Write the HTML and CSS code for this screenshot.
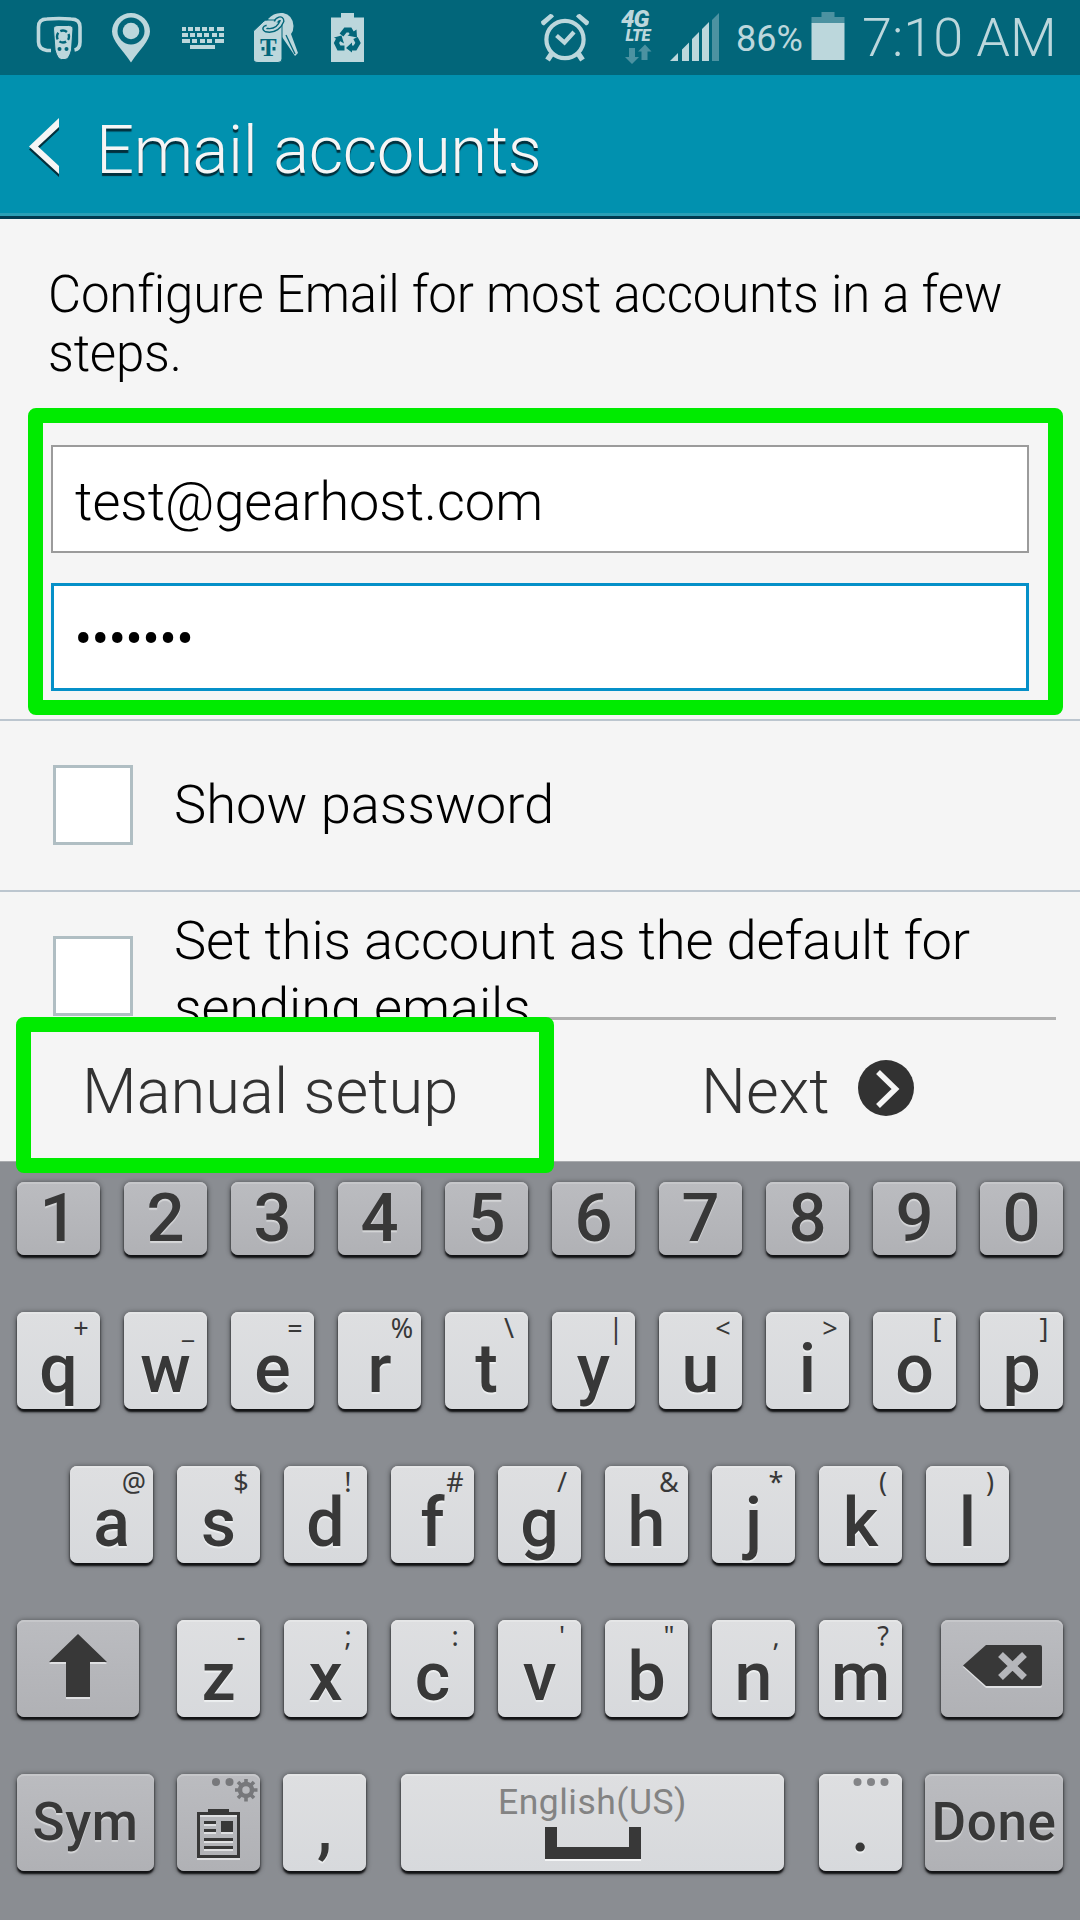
FILE: index.html
```html
<!DOCTYPE html>
<html lang="en">
<head>
<meta charset="utf-8">
<title>Email accounts</title>
<link rel="stylesheet" href="styles.css">
</head>
<body>
<div class="screen">
  <div class="status">
    <svg class="status-left" viewBox="0 0 400 75" width="400" height="75">
      <g fill="none" stroke="#bcd7dc" stroke-width="3.6">
        <path d="M51 50.5H47Q38.500 49 38.500 42V27Q38.500 19 47 19Q59 18 71 19Q80 19 80 27V42Q80 49 74.500 50"/>
      </g>
      <path fill="#bcd7dc" stroke="#02667a" stroke-width="1" d="M53.500 29Q53.500 25.500 58 25.500H68.500Q73 25.500 73 29L71.500 50Q69 59.500 65 59.500H61.500Q57.500 59.500 55 50Z"/>
      <circle cx="63" cy="36.500" r="6" fill="none" stroke="#02667a" stroke-width="2.400" stroke-dasharray="7 2.420" stroke-dashoffset="3.500"/>
      <circle cx="59.500" cy="49" r="2" fill="#02667a"/><circle cx="66.500" cy="49" r="2" fill="#02667a"/>
      <path fill="#bcd7dc" d="M131 13a19 18.500 0 0 1 19 18.500C150 41 139 50 131 62.500C123 50 112 41 112 31.500A19 18.500 0 0 1 131 13Z"/>
      <circle cx="131" cy="31" r="13.500" fill="#02667a"/><circle cx="131" cy="31" r="8.300" fill="#bcd7dc"/>
      <g fill="#bcd7dc">
        <path d="M182 27h4v4h-4zM188 27h5v4h-5zM195 27h5v4h-5zM202 27h5v4h-5zM209 27h5v4h-5zM217 27h7v4h-7zM182 33h6v4h-6zM190 33h5v4h-5zM197 33h5v4h-5zM204 33h5v4h-5zM212 33h5v4h-5zM219 33h5v4h-5zM182 39h8v4h-8zM192 39h5v4h-5zM200 39h5v4h-5zM207 39h5v4h-5zM215 39h9v4h-9zM190 45h25v4h-25z"/>
        <path d="M268 19Q274 12 283 13Q293 15 293.500 26Q293.500 31 291 34L298 53L295 56L280 34Z"/>
        <path d="M253.500 31L264 21Q265 20 268 20H279Q282 21 282 24V59Q282 62.500 278 62.500H258Q253.500 62.500 253.500 59Z" stroke="#02667a" stroke-width="1"/>
      </g>
      <path d="M267 27Q263 28 266 30C275 32 280 26 282 21C282 17 277 19 276 22" fill="none" stroke="#02667a" stroke-width="5"/>
      <path d="M267 27Q263 28 266 30C275 32 280 26 282 21C282 17 277 19 276 22" fill="none" stroke="#bcd7dc" stroke-width="2.300"/>
      <path d="M286 35L295 54" stroke="#02667a" stroke-width="1.300"/>
      <text class="tag-letter" x="268.300" y="56" text-anchor="middle">T</text>
      <path fill="#02667a" d="M261.500 47h3v3.500h-3zM272.500 47h3v3.500h-3z"/>
      <path fill="#bcd7dc" d="M341 13h13v4.500h10V62H331V17.500H341Z"/>
      <g fill="none" stroke="#02667a" stroke-width="4.800">
        <path d="M341.500 35L345.500 30H350L353 35"/>
        <path d="M355.500 38L358 43L355 48H350"/>
        <path d="M344.500 48H339L336.500 43L339 38"/>
      </g>
      <path fill="#02667a" d="M347.500 35.500L357 37.500L356.500 29.500ZM352 42.500V52.500L346 48ZM334 37.500L341.500 35.500L344 43.500Z"/>
    </svg>
    <svg class="status-right" viewBox="530 0 206 75" width="206" height="75">
      <g fill="none" stroke="#bcd7dc">
        <circle cx="565" cy="39.500" r="18.600" stroke-width="4.200"/>
        <path stroke-width="4.200" d="M556.500 35.500L564.500 42.500L574 32"/>
        <path stroke-width="5.500" d="M551.500 54L547.500 60M578.500 54L582.500 60"/>
      </g>
      <path fill="#bcd7dc" d="M541 21.500L550 14Q553 13.500 554 16.500L544 25.500Q541 25 541 21.500ZM589 21.500L580 14Q577 13.500 576 16.500L586 25.500Q589 25 589 21.500Z"/>
      <text class="net4g" x="621" y="27.300">4G</text>
      <text class="netlte" x="625.500" y="41">LTE</text>
      <path fill="#4c92a1" d="M629 48h6v9h4L632 64L625 57h4zM641.500 60V51.500H638L645 44.500L651.500 51.500H647.500V60z"/>
      <path fill="#bcd7dc" d="M670 61L678 53V61ZM682 61V49.500L689 42.500V61ZM692 61V39L699 32V61ZM702 61V29L709 22V61Z"/>
      <path fill="#4c92a1" d="M712 61V20L719 13V61Z"/>
    </svg>
    <span class="percent">86%</span>
    <svg class="battery" viewBox="0 0 34 75" width="34" height="75"><path fill="#4c92a1" d="M10.500 12H23.500V17H33.500V23H.5V17H10.500Z"/><path fill="#bcd7dc" d="M.5 23H33.500V60H.5Z"/></svg>
    <span class="clock">7:10 AM</span>
  </div>

  <div class="header">
    <svg class="back" viewBox="0 0 34 64" width="34" height="64"><path d="M31 5V14L10 33.500L31 53V61L1 33.500Z" fill="#022f3c"/><path d="M31 2V11L10 30.500L31 50V58L1 30.500Z" fill="#f5f5f5"/></svg>
    <h1 class="title">Email accounts</h1>
  </div>

  <div class="content">
    <p class="intro">Configure Email for most accounts in a few steps.</p>
    <div class="fields">
      <div class="field">test@gearhost.com</div>
      <div class="field focused">•••••••</div>
    </div>
    <div class="option show"><span class="box"></span><span>Show password</span></div>
    <div class="option default"><span class="box"></span><span>Set this account as the default for sending emails</span></div>
    <div class="mark mark-fields"></div>
  </div>

  <div class="footer">
    <span class="manual">Manual setup</span>
    <span class="next">Next</span>
    <svg class="go" viewBox="0 0 58 58" width="58" height="58"><circle cx="29" cy="28" r="28" fill="#323232"/><path d="M21 12L38.500 29L21 46" fill="none" stroke="#f5f5f5" stroke-width="5.500"/></svg>
    <div class="mark mark-manual"></div>
  </div>

  <div class="keyboard">
    <div class="row numbers">
      <div class="key fn">1</div><div class="key fn">2</div><div class="key fn">3</div><div class="key fn">4</div><div class="key fn">5</div><div class="key fn">6</div><div class="key fn">7</div><div class="key fn">8</div><div class="key fn">9</div><div class="key fn">0</div>
    </div>
    <div class="row">
      <div class="key">q<i>+</i></div><div class="key">w<i>_</i></div><div class="key">e<i>=</i></div><div class="key">r<i>%</i></div><div class="key">t<i>\</i></div><div class="key">y<i>|</i></div><div class="key">u<i>&lt;</i></div><div class="key">i<i>&gt;</i></div><div class="key">o<i>[</i></div><div class="key">p<i>]</i></div>
    </div>
    <div class="row home">
      <div class="key">a<i>@</i></div><div class="key">s<i>$</i></div><div class="key">d<i>!</i></div><div class="key">f<i>#</i></div><div class="key">g<i>/</i></div><div class="key">h<i>&amp;</i></div><div class="key">j<i>*</i></div><div class="key">k<i>(</i></div><div class="key">l<i>)</i></div>
    </div>
    <div class="row">
      <div class="key fn wide shift"><svg viewBox="0 0 122 97" width="122" height="97"><path d="M61 16L90 44H73V79H49V44H32Z" fill="#dfe0e2"/><path d="M61 14L90 42H73V77H49V42H32Z" fill="#383838"/></svg></div>
      <div class="key">z<i>-</i></div><div class="key">x<i>;</i></div><div class="key">c<i>:</i></div><div class="key">v<i>'</i></div><div class="key">b<i>"</i></div><div class="key">n<i>,</i></div><div class="key">m<i>?</i></div>
      <div class="key fn wide del"><svg viewBox="0 0 122 97" width="122" height="97"><path d="M22 47L45 27H99Q101 27 101 29V66Q101 68 99 68H45Z" fill="#dfe0e2"/><path d="M22 45.500L45 25H99Q101 25 101 27V64Q101 66 99 66H45Z" fill="#383838"/><path d="M59.500 34.500L83.500 57.500M83.500 34.500L59.500 57.500" stroke="#b5b6ba" stroke-width="7"/></svg></div>
    </div>
    <div class="row bottom">
      <div class="key fn word sym">Sym</div>
      <div class="key fn clip"><svg viewBox="177 1774 83 97" width="83" height="97">
        <g fill="#77787b"><circle cx="216" cy="1782" r="4"/><circle cx="229.500" cy="1782" r="4"/></g>
        <circle cx="246" cy="1790" r="6" fill="none" stroke="#77787b" stroke-width="4.500"/>
        <path stroke="#77787b" stroke-width="3.600" d="M246 1779V1783M246 1797V1801.500M235 1790H239M253 1790H257.500M238 1782L241 1785M251 1795L254 1798M254 1782L251 1785M238 1798L241 1795"/>
        <path d="M198.500 1815.500H238.500V1858.500H198.500Z" fill="none" stroke="#dfe0e2" stroke-width="3"/>
        <path d="M198.500 1813.500H238.500V1856.500H198.500Z" fill="none" stroke="#383838" stroke-width="3"/>
        <path fill="#383838" d="M208 1809H229V1815H208Z"/>
        <path stroke="#dfe0e2" stroke-width="3" d="M204 1824.500H216M204 1832.500H216M204 1841.500H233M204 1849.500H233M221 1832.500H233"/>
        <path stroke="#383838" stroke-width="3" d="M204 1822.500H216M204 1830.500H216M204 1839.500H233M204 1847.500H233"/>
        <path fill="#383838" d="M221 1821H233V1832H221Z"/></svg></div>
      <div class="key comma">,</div>
      <div class="key space"><span class="lang">English(US)</span><svg viewBox="0 0 96 35" width="96" height="35"><path fill="#f4f5f6" d="M0 3H12V22H84V3H96V34H0Z"/><path fill="#383838" d="M0 0H12V20H84V0H96V32H0Z"/></svg></div>
      <div class="key dot">.<svg class="dots" viewBox="0 0 36 8" width="36" height="8"><g fill="#838487"><circle cx="4.500" cy="4" r="4"/><circle cx="18" cy="4" r="4"/><circle cx="31.500" cy="4" r="4"/></g></svg></div>
      <div class="key fn word done">Done</div>
    </div>
  </div>
</div>
</body>
</html>
```
FILE: styles.css
```css
* { box-sizing: border-box; }
body { margin: 0; font-family: Roboto, "Noto Sans", sans-serif; background: #f5f5f5; }
svg { display: block; flex: none; }
.screen { width: 1080px; height: 1920px; overflow: hidden; display: flex; flex-direction: column; background: #f5f5f5; }

.status { height: 75px; flex: none; display: flex; align-items: flex-start; background: #02667a; color: #bcd7dc; line-height: 75px; white-space: nowrap; font-weight: 300; }
.status-right { margin-left: 130px; }
.percent { width: 75px; font-size: 36px; padding-top: 2px; font-weight: 400; line-height: 73px; padding-top: 3px; }
.battery { margin-right: 17px; }
.clock { font-size: 54px; }
.tag-letter { font: 700 25px "Liberation Serif", serif; fill: #02667a; }
.net4g { font: italic 900 24px Roboto, sans-serif; fill: #bcd7dc; letter-spacing: -1px; }
.netlte { font: italic 900 16.500px Roboto, sans-serif; fill: #bcd7dc; letter-spacing: -.6px; }

.header { height: 144px; flex: none; display: flex; align-items: flex-start; padding-left: 28px; background: #0191af; border-bottom: 3px solid #003a50; box-shadow: inset 0 -3px #2a9fb6; }
.back { margin-top: 41px; }
.title { margin: 42px 0 0 34px; font-size: 67px; line-height: 67px; letter-spacing: -.45px; font-weight: 300; color: #f5f5f5; text-shadow: 0 3px 1px #022f3c; }

.content { position: relative; height: 798px; flex: none; overflow: hidden; color: #000; font-weight: 300; }
.intro { margin: 0; padding: 46px 40px 0 48px; height: 226px; font-size: 51px; line-height: 59px; letter-spacing: -.2px; }
.fields { display: flex; flex-direction: column; gap: 30px; padding: 0 51px; height: 274px; }
.field { height: 108px; flex: none; background: #fff; border: 2px solid #9b9b9b; padding: 5px 0 0 22px; font-size: 54px; line-height: 99px; }
.focused { border: 3px solid #0590c8; padding: 3px 0 0 20px; font-size: 57px; letter-spacing: -1.500px; }
.option { display: flex; border-top: 2px solid #bcc6cf; padding-left: 53px; font-size: 54.3px; line-height: 67px; gap: 41px; }
.show { height: 171px; align-items: center; padding-bottom: 1px; }
.show span:last-child { padding-bottom: 2px; }
.default { height: 160px; padding-top: 15px; padding-right: 80px; letter-spacing: -.13px; }
.box { width: 80px; height: 80px; flex: none; background: #fff; border: 3px solid #b0bec3; }
.default .box { margin-top: 29px; }
.mark { position: absolute; border: 15px solid #00eb00; border-radius: 8px; }
.mark-fields { left: 28px; top: 189px; width: 1035px; height: 307px; }

.footer { position: relative; height: 144px; flex: none; display: flex; align-items: flex-start; margin: 0 24px; padding: 40px 0 0 58px; border-top: 3px solid #b0b0b0; color: #323232; font-size: 63.200px; line-height: 63px; font-weight: 300; }
.manual { width: 619px; }
.next { width: 156px; }
.mark-manual { left: -8.500px; top: -3px; width: 538px; height: 156px; z-index: 2; }

.keyboard { flex: 1; background: #8a8d92; border-top: 1px solid #a9abae; padding: 20px 17px 0; display: flex; flex-direction: column; gap: 57px; }
.row { display: flex; justify-content: space-between; height: 97px; }
.numbers { height: 73px; }
.home { padding: 0 54px 0 53px; }
.key { position: relative; width: 83px; height: 100%; padding-top: 23px; border-radius: 7px; text-align: center; color: #383838; font-size: 68px; line-height: 68px; font-weight: 500; background: linear-gradient(#dedfe1, #d7d9dc); box-shadow: 0 3px 2px #111214, 0 1px 5px 1px rgba(0,0,0,.4), inset 0 2px #e5e6e7; text-shadow: 0 2px 1px #eef0f1; }
.numbers .key { padding-top: 2px; font-size: 67px; }
.fn { background: linear-gradient(#bbbcc0, #b0b1b5); box-shadow: 0 3px 2px #111214, 0 1px 5px 1px rgba(0,0,0,.4), inset 0 2px #c6c7ca; text-shadow: 0 2px 1px #d6d7d9; }
.key i { position: absolute; top: 1px; right: 0; width: 38px; font: 400 27px/30px "Noto Sans", sans-serif; text-align: center; text-shadow: none; }
.wide { width: 122px; padding: 0; }
.shift { margin-right: 14px; }
.del { margin-left: 15px; }
.clip { padding: 0; }
.word { font-size: 53px; letter-spacing: .6px; padding-top: 21.500px; line-height: 53px; }
.space { width: 383px; padding-top: 10px; display: flex; flex-direction: column; align-items: center; gap: 7px; }
.lang { font-size: 35.500px; line-height: 36px; font-weight: 400; letter-spacing: .5px; color: #838383; text-shadow: none; }
.dots { position: absolute; top: 4px; left: 34px; }
.bottom { justify-content: flex-start; }
.sym { width: 137px; margin-right: 23px; }
.bottom .clip { margin-right: 23px; }
.comma { margin-right: 35px; }
.dot { margin-left: 35px; }
.comma, .dot { padding-top: 20px; }
.done { width: 138px; margin-left: 23px; }
```
